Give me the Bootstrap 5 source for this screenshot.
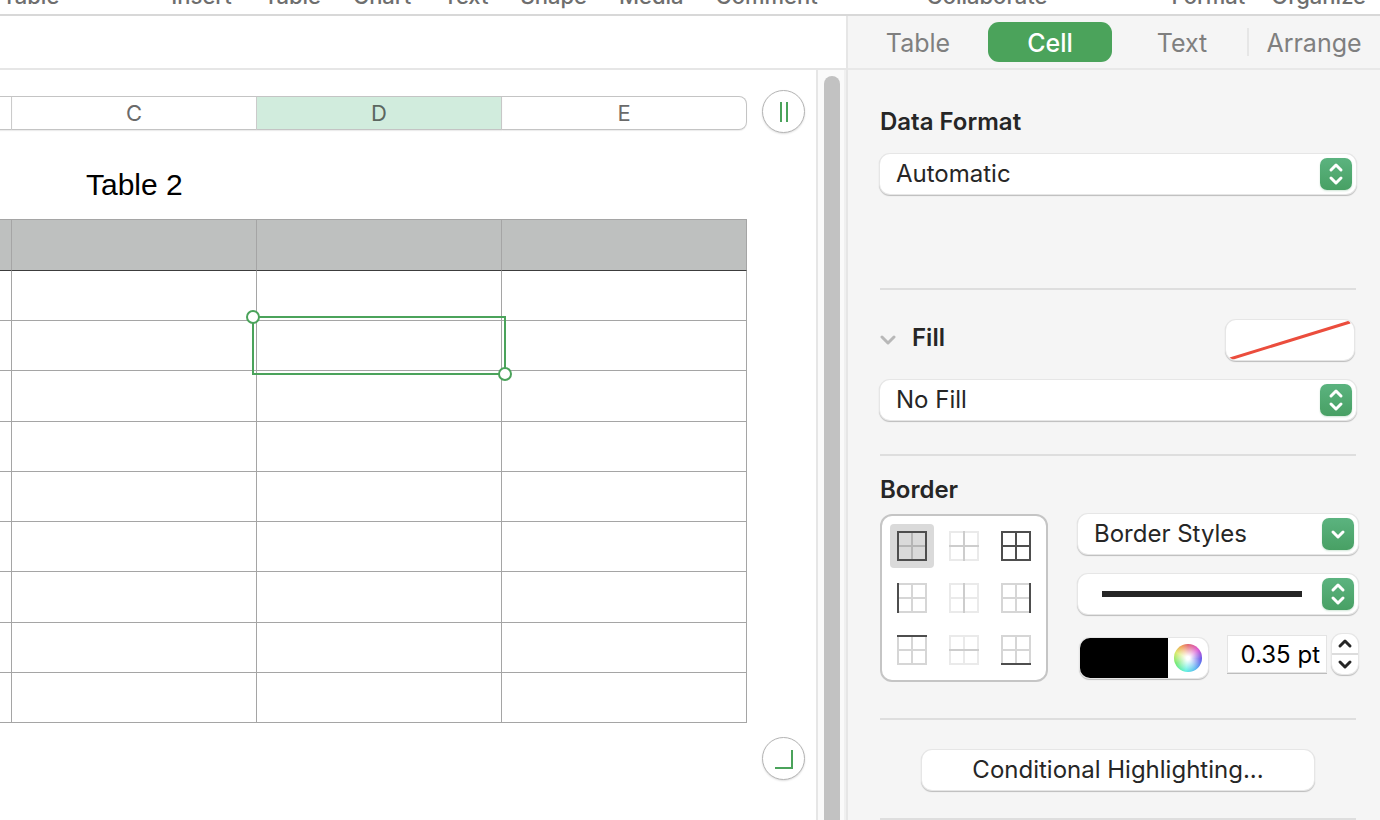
<!DOCTYPE html>
<html lang="en">
<head>
<meta charset="utf-8">
<meta name="viewport" content="width=device-width, initial-scale=1">
<title>Table 2</title>
<link rel="stylesheet" href="https://cdn.jsdelivr.net/npm/bootstrap@5.3.0/dist/css/bootstrap.min.css">
<style>
  :root { --green: #4ba35b; --line: #e6e6e6; --grid: #a5a5a5; --ink: #262626; }
  body { font-family: Inter, "Noto Sans", sans-serif; font-size: 24px; line-height: 32px; color: var(--ink); background: #fff; }
  button, input, select { font: inherit; color: inherit; border: 0; padding: 0; background: none; }

  /* Window toolbar: only the lower edge of the labels shows */
  .toolbar { height: 16px; border-bottom: 2px solid #d8d8d8; font-size: 22px; line-height: 24px; font-weight: 500; color: #6e6e6e; padding: 0 14px 0 2px; }
  .toolbar button { line-height: 24px; margin-bottom: 6px; white-space: nowrap; }
  .tool-insert { gap: 32px; margin-left: 112px; }
  .tool-panels { gap: 26px; margin-left: 124px; }

  .formula-bar { height: 54px; border-bottom: 2px solid var(--line); }

  /* Sheet */
  .sheet { padding: 20px 0 40px; }
  .sheet-main { padding-top: 6px; }
  .sheet-side { width: 69px; padding-left: 15px; }
  .letters, .cells { width: 100%; table-layout: fixed; border-collapse: separate; border-spacing: 0; }
  .letters .stub, .cells .stub { width: 12px; }
  .letters th { height: 34px; padding: 0; font-size: 22px; line-height: 32px; font-weight: 400; text-align: center; color: #6a6a6a; border: 1px solid #c4c4c4; border-left: 0; box-shadow: 0 1px 1px #ececec; }
  .letters th:last-child { border-radius: 0 8px 8px 0; }
  .letters .picked { background: #d1ecdd; color: #5b6660; }
  .sheet-title { font-family: "Liberation Sans", Arial, sans-serif; font-size: 30px; line-height: 36px; color: #000; margin: 37px 0 16px; padding-left: 86px; }
  .cells { height: 504px; border-top: 1px solid var(--grid); }
  .cells th, .cells td { padding: 0; border: solid var(--grid); border-width: 0 1px 1px 0; position: relative; }
  .cells th { height: 51px; background: #bec0bf; border-bottom-color: #3c3c3c; }
  .selection { position: absolute; inset: -5px; border: 2px solid var(--green); z-index: 1; }
  .selection::before, .selection::after { content: ""; position: absolute; width: 14px; height: 14px; border: 2px solid var(--green); border-radius: 50%; background: #fff; }
  .selection::before { left: -8px; top: -8px; }
  .selection::after { right: -8px; bottom: -8px; }
  .round { width: 43px; height: 43px; border: 1px solid #b4b4b4 !important; border-radius: 50%; background: #fff !important; box-shadow: 0 1px 2px #ddd; }
  .round svg { display: block; margin: auto; }

  .track { width: 30px; background: #fafafa; border-left: 2px solid var(--line); border-right: 2px solid #f0f0f0; padding: 6px 4px 0 6px; }
  .thumb { background: #c2c2c2; border-radius: 8px 8px 0 0; height: 100%; }

  /* Inspector */
  .inspector { width: 534px; background: #f5f5f5; border-left: 2px solid var(--line); }
  .tabs { height: 54px; padding-left: 4px; border-bottom: 2px solid #e8e8e8; }
  .tabs button { flex: 1 1 0; height: 40px; margin: 0 4px; border-radius: 11px; line-height: 42px; color: #7f7f7f; font-size: 25px; }
  .tabs .active { background: var(--green); color: #fff; font-weight: 500; }
  .tabs .rule { width: 2px; height: 28px; margin: 0 -1px; background: #e6e6e6; }
  .group { padding: 0 24px 0 32px; }
  .group-format { padding-top: 36px; padding-bottom: 94px; }
  .group-fill { padding-top: 30px; padding-bottom: 34px; }
  .group-border { padding: 18px 22px 36px 32px; }
  .group-highlight { padding-top: 30px; padding-bottom: 28px; }
  .fill-row { margin-bottom: 20px; }
  .border-controls { margin-left: 30px; gap: 20px; }
  .inspector hr { margin: 0 24px 0 32px; border: 0; border-top: 2px solid #dedede; opacity: 1; }
  .group h2 { font-size: 24px; line-height: 32px; font-weight: 600; margin: 0; }
  .raised { background: #fff !important; border-radius: 10px; box-shadow: 0 0 0 1px #e6e6e6, 0 1px 1px 1px #bcbcbc; }
  .picker { position: relative; display: block; }
  .picker select, .picker button { display: block; width: 100%; height: 40px; line-height: 40px; padding: 0 48px 0 16px; appearance: none; text-align: left; }
  .picker .knob { position: absolute; right: 4px; top: 4px; pointer-events: none; }
  .picker .stroke-sample { position: absolute; left: 24px; right: 56px; top: 17px; height: 6px; background: var(--ink); pointer-events: none; }
  .knob { width: 32px; height: 32px; border-radius: 7px; background: linear-gradient(#5bb37f, #48a064); box-shadow: 0 1px 2px #cfe5d6; }
  .swatch { width: 128px; height: 40px; overflow: hidden; margin-right: 2px; }
  .swatch svg { display: block; }

  .edges { display: grid; grid-template-columns: repeat(3, 44px); gap: 8px; padding: 8px; border: 2px solid #c5c5c5; border-radius: 12px; background: #fff; }
  .edges button { height: 44px; border-radius: 4px; }
  .edges .on { background: #dadada; }
  .edges svg { display: block; margin: auto; fill: none; stroke-width: 2; shape-rendering: crispEdges; }
  .k { stroke: #4e4e4e; } .m { stroke: #d6d6d6; } .l { stroke: #eaeaea; } .g { stroke: #b5b5b5; } .c { stroke: #cdcdcd; }

  .well { width: 128px; height: 40px; overflow: hidden; margin: 4px 0 0 2px; }
  .well input { width: 88px; height: 40px; appearance: none; display: block; }
  .well input::-webkit-color-swatch-wrapper { padding: 0; }
  .well input::-webkit-color-swatch { border: 0; border-radius: 0; }
  .wheel { width: 28px; height: 28px; margin: 6px; border-radius: 50%; background: radial-gradient(closest-side, #fff 12%, #ffffff00 100%), conic-gradient(#e0606a, #d94fd0 50deg, #5a4fe8 95deg, #55b4f0 145deg, #5af0e0 190deg, #6be86b 245deg, #d8e860 295deg, #f0a050 330deg, #e0606a) !important; }
  .points { width: 98px; height: 36px; margin: 2px 6px 0 auto; background: #fff !important; color: #000 !important; text-align: right; padding-right: 6px !important; border-radius: 0; box-shadow: 0 0 0 1px #e4e4e4, 0 1px 0 1px #bdbdbd; }
  .stepper { width: 26px; height: 40px; overflow: hidden; }
  .stepper button { height: 19px; }
  .stepper button + button { height: 21px; border-top: 2px solid #dcdcdc; }
  .stepper svg, .knob svg { display: block; fill: none; stroke-linecap: round; stroke-linejoin: round; margin: auto; }
  .wide-button { width: 392px; height: 40px; }
</style>
</head>
<body class="vh-100 overflow-hidden d-flex flex-column">

<header class="toolbar d-flex align-items-end overflow-hidden flex-shrink-0">
  <button type="button">Table</button>
  <div class="tool-insert d-flex">
    <button type="button">Insert</button>
    <button type="button">Table</button>
    <button type="button">Chart</button>
    <button type="button">Text</button>
    <button type="button">Shape</button>
    <button type="button">Media</button>
    <button type="button">Comment</button>
  </div>
  <button type="button" class="ms-auto">Collaborate</button>
  <div class="tool-panels d-flex">
    <button type="button">Format</button>
    <button type="button">Organize</button>
  </div>
</header>

<div class="d-flex flex-grow-1 overflow-hidden">
  <main class="flex-grow-1 d-flex flex-column overflow-hidden">
    <div class="formula-bar flex-shrink-0"></div>
    <div class="d-flex flex-grow-1">
      <div class="sheet flex-grow-1 d-flex">
        <div class="sheet-main flex-grow-1">
          <table class="letters">
            <tr><th class="stub"></th><th>C</th><th class="picked">D</th><th>E</th></tr>
          </table>
          <h1 class="sheet-title">Table 2</h1>
          <table class="cells">
            <thead><tr><th class="stub"></th><th></th><th></th><th></th></tr></thead>
            <tbody>
              <tr><td></td><td></td><td></td><td></td></tr>
              <tr><td></td><td></td><td><div class="selection"></div></td><td></td></tr>
              <tr><td></td><td></td><td></td><td></td></tr>
              <tr><td></td><td></td><td></td><td></td></tr>
              <tr><td></td><td></td><td></td><td></td></tr>
              <tr><td></td><td></td><td></td><td></td></tr>
              <tr><td></td><td></td><td></td><td></td></tr>
              <tr><td></td><td></td><td></td><td></td></tr>
              <tr><td></td><td></td><td></td><td></td></tr>
            </tbody>
          </table>
        </div>
        <div class="sheet-side flex-shrink-0 d-flex flex-column justify-content-between">
          <button type="button" class="round" aria-label="Add columns">
            <svg width="20" height="20" fill="none" stroke="#4ba35b" stroke-width="2"><path d="M7 0v20M13 0v20"/></svg>
          </button>
          <button type="button" class="round" aria-label="Add columns and rows">
            <svg width="20" height="20" fill="none" stroke="#4ba35b" stroke-width="2"><path d="M18 1v18H1"/></svg>
          </button>
        </div>
      </div>
      <div class="track flex-shrink-0"><div class="thumb"></div></div>
    </div>
  </main>

  <aside class="inspector flex-shrink-0 overflow-hidden">
    <nav class="tabs d-flex align-items-center">
      <button type="button">Table</button>
      <button type="button" class="active">Cell</button>
      <button type="button">Text</button>
      <span class="rule"></span>
      <button type="button">Arrange</button>
    </nav>

    <section class="group group-format">
      <h2><label for="format">Data Format</label></h2>
      <div class="picker mt-3">
        <select id="format" class="raised"><option>Automatic</option></select>
        <span class="knob"><svg width="32" height="32" stroke="#fff" stroke-width="3"><path d="M11 12l5-5 5 5M11 20l5 5 5-5"/></svg></span>
      </div>
    </section>
    <hr>

    <section class="group group-fill">
      <div class="fill-row d-flex align-items-center">
        <svg width="16" height="12" fill="none" stroke="#b8b8b8" stroke-width="3" stroke-linecap="round" stroke-linejoin="round"><path d="M2 3l6 6 6-6"/></svg>
        <h2 class="ms-3 pb-1"><label for="fill">Fill</label></h2>
        <button type="button" class="swatch raised ms-auto" aria-label="Fill colour">
          <svg width="128" height="40"><path d="M4 39L124 2" stroke="#eb4d3d" stroke-width="3"/></svg>
        </button>
      </div>
      <div class="picker">
        <select id="fill" class="raised"><option>No Fill</option></select>
        <span class="knob"><svg width="32" height="32" stroke="#fff" stroke-width="3"><path d="M11 12l5-5 5 5M11 20l5 5 5-5"/></svg></span>
      </div>
    </section>
    <hr>

    <section class="group-border group-heading group">
      <h2>Border</h2>
      <div class="d-flex mt-2">
        <div class="edges" role="group" aria-label="Border edges">
          <button type="button" class="on" aria-label="Outside"><svg width="30" height="30"><path class="g" d="M15 0v30M0 15h30"/><path class="k" d="M1 1h28v28H1z"/></svg></button>
          <button type="button" aria-label="Inside"><svg width="30" height="30"><path class="l" d="M1 1h28v28H1z"/><path class="c" d="M15 0v30M0 15h30"/></svg></button>
          <button type="button" aria-label="All"><svg width="30" height="30"><path class="k" d="M1 1h28v28H1zM15 0v30M0 15h30"/></svg></button>
          <button type="button" aria-label="Left"><svg width="30" height="30"><path class="m" d="M1 1h28v28H1zM15 0v30M0 15h30"/><path class="k" d="M1 0v30"/></svg></button>
          <button type="button" aria-label="Inside vertical"><svg width="30" height="30"><path class="l" d="M1 1h28v28H1zM0 15h30"/><path class="c" d="M15 0v30"/></svg></button>
          <button type="button" aria-label="Right"><svg width="30" height="30"><path class="m" d="M1 1h28v28H1zM15 0v30M0 15h30"/><path class="k" d="M29 0v30"/></svg></button>
          <button type="button" aria-label="Top"><svg width="30" height="30"><path class="m" d="M1 1h28v28H1zM15 0v30M0 15h30"/><path class="k" d="M0 1h30"/></svg></button>
          <button type="button" aria-label="Inside horizontal"><svg width="30" height="30"><path class="l" d="M1 1h28v28H1zM15 0v30"/><path class="c" d="M0 15h30"/></svg></button>
          <button type="button" aria-label="Bottom"><svg width="30" height="30"><path class="m" d="M1 1h28v28H1zM15 0v30M0 15h30"/><path class="k" d="M0 29h30"/></svg></button>
        </div>
        <div class="border-controls flex-grow-1 d-flex flex-column">
          <div class="picker">
            <button type="button" class="raised">Border Styles</button>
            <span class="knob"><svg width="32" height="32" stroke="#fff" stroke-width="3"><path d="M11 14l5 5 5-5"/></svg></span>
          </div>
          <div class="picker">
            <select class="raised" aria-label="Line style"><option></option></select>
            <span class="stroke-sample"></span>
            <span class="knob"><svg width="32" height="32" stroke="#fff" stroke-width="3"><path d="M11 12l5-5 5 5M11 20l5 5 5-5"/></svg></span>
          </div>
          <div class="d-flex align-items-start">
            <div class="well raised d-flex">
              <input type="color" value="#000000" aria-label="Border colour">
              <button type="button" class="wheel" aria-label="More colours"></button>
            </div>
            <input type="text" class="points" value="0.35 pt" aria-label="Line width">
            <div class="stepper raised d-flex flex-column">
              <button type="button" aria-label="Increase"><svg width="26" height="19" stroke="#262626" stroke-width="3"><path d="M8 12l5-5 5 5"/></svg></button>
              <button type="button" aria-label="Decrease"><svg width="26" height="19" stroke="#262626" stroke-width="3"><path d="M8 7l5 5 5-5"/></svg></button>
            </div>
          </div>
        </div>
      </div>
    </section>
    <hr>

    <section class="group group-highlight text-center">
      <button type="button" class="wide-button raised">Conditional Highlighting...</button>
    </section>
    <hr>
  </aside>
</div>

<script src="https://cdn.jsdelivr.net/npm/bootstrap@5.3.0/dist/js/bootstrap.bundle.min.js"></script>
</body>
</html>
